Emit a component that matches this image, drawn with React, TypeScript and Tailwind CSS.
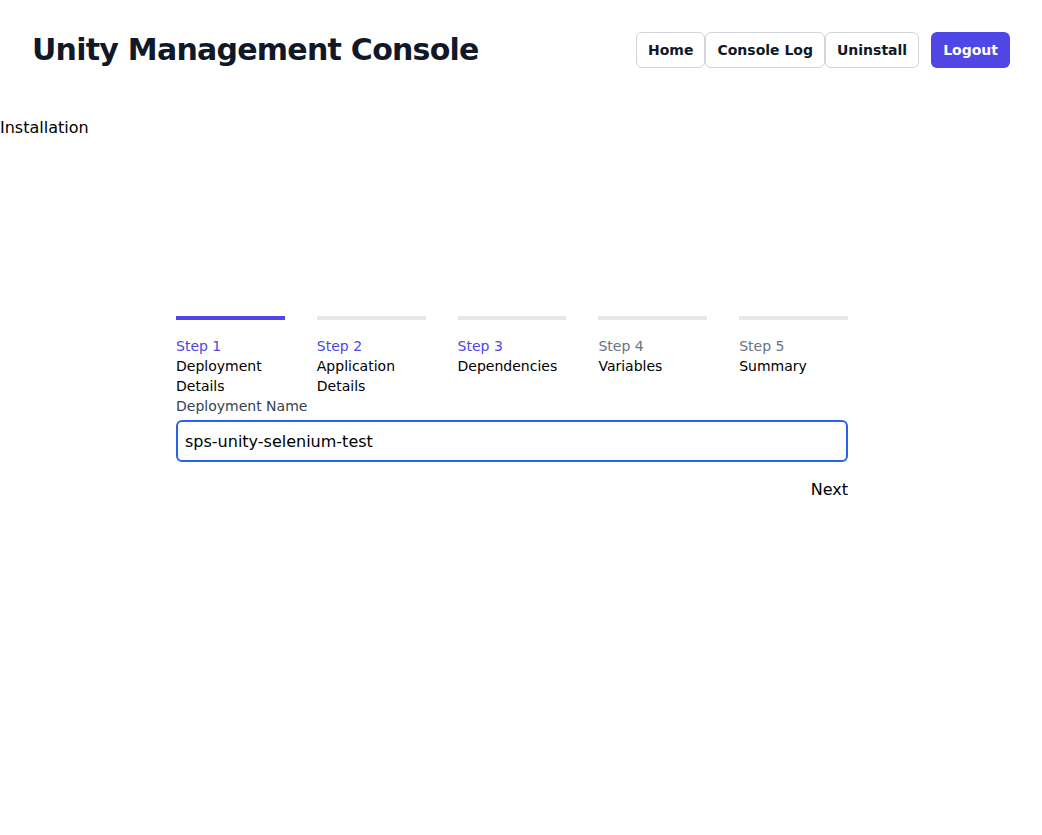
import { useState } from "react";

const steps = [
  { id: 1, name: "Deployment Details" },
  { id: 2, name: "Application Details" },
  { id: 3, name: "Dependencies" },
  { id: 4, name: "Variables" },
  { id: 5, name: "Summary" },
];

function Header() {
  return (
    <header className="flex items-center justify-between p-8">
      <h1 className="text-3xl font-bold tracking-tight text-[#111827]">Unity Management Console</h1>
      <nav className="flex items-center">
        <button className="h-9 rounded-md border border-[#d1d5db] bg-white px-[11px] text-sm font-semibold text-[#111827]">
          Home
        </button>
        <button className="h-9 rounded-md border border-[#d1d5db] bg-white px-[11px] text-sm font-semibold text-[#111827]">
          Console Log
        </button>
        <button className="h-9 rounded-md border border-[#d1d5db] bg-white px-[11px] text-sm font-semibold text-[#111827]">
          Uninstall
        </button>
        <button className="ml-3 h-9 rounded-md bg-[#4f46e5] px-3 text-sm font-semibold text-white">
          Logout
        </button>
      </nav>
    </header>
  );
}

export default function App() {
  const [name, setName] = useState("sps-unity-selenium-test");
  const current = 1;

  return (
    <div className="min-h-screen bg-white text-black" style={{ fontFamily: '"DejaVu Sans", sans-serif' }}>
      <Header />
      <div className="mt-4 leading-6">Installation</div>

      <div className="mt-[176px] w-[1024px]">
        <div className="mx-auto w-[672px]">
          <ol className="flex gap-8">
            {steps.map((step) => {
              const active = step.id <= current;
              const reached = step.id <= 3;
              return (
                <li key={step.id} className="flex-1">
                  <div className={active ? "h-1 bg-[#4f46e5]" : "h-1 bg-[#e5e7eb]"} />
                  <div className="pt-4 text-sm leading-5">
                    <div className={reached ? "text-[#4f46e5]" : "text-[#6b7280]"}>Step {step.id}</div>
                    <div>{step.name}</div>
                  </div>
                </li>
              );
            })}
          </ol>

          <label className="block text-sm leading-5 text-[#374151]">Deployment Name</label>
          <input
            autoFocus
            value={name}
            onChange={(e) => setName(e.target.value)}
            className="mt-1 block h-[42px] w-full rounded-md border-2 border-[#2563eb] px-[7px] text-base caret-black outline-none"
          />
          <div className="mt-4 flex justify-end">
            <button className="text-base leading-6">Next</button>
          </div>
        </div>
      </div>
    </div>
  );
}
